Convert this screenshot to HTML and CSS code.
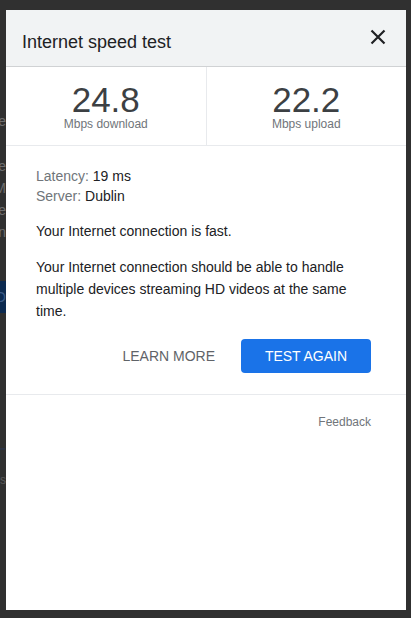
FILE: index.html
```html
<!DOCTYPE html>
<html>
<head>
<meta charset="utf-8">
<link rel="stylesheet" href="styles.css">
</head>
<body>
<div class="backdrop">
  <div class="frag frag-e">Free</div>
  <div class="frag-group">
    <div class="frag">are</div>
    <div class="frag">IM</div>
    <div class="frag">one</div>
    <div class="frag">in</div>
  </div>
  <div class="frag-btn">GO</div>
  <div class="frag frag-t">IT</div>
  <div class="frag frag-s">bs</div>
</div>
<div class="dialog">
  <div class="header">
    <div class="title">Internet speed test</div>
    <div class="close">
      <svg width="24" height="24" viewBox="0 0 24 24"><path d="M5.5 5.5 L18.5 18.5 M18.5 5.5 L5.5 18.5" stroke="#202124" stroke-width="2.2" fill="none"/></svg>
    </div>
  </div>
  <div class="stats">
    <div class="stat">
      <div class="num">24.8</div>
      <div class="unit">Mbps download</div>
    </div>
    <div class="stat stat-right">
      <div class="num">22.2</div>
      <div class="unit">Mbps upload</div>
    </div>
  </div>
  <div class="content">
    <div class="meta">
      <div><span class="label">Latency:</span> 19 ms</div>
      <div><span class="label">Server:</span> Dublin</div>
    </div>
    <p class="para">Your Internet connection is fast.</p>
    <p class="para">Your Internet connection should be able to handle multiple devices streaming HD videos at the same time.</p>
  </div>
  <div class="actions">
    <span class="learn">LEARN MORE</span>
    <span class="test">TEST AGAIN</span>
  </div>
  <div class="footer">
    <span class="feedback">Feedback</span>
  </div>
</div>
</body>
</html>
```

FILE: styles.css
```css
html, body {
  margin: 0;
  padding: 0;
}
body {
  width: 411px;
  height: 618px;
  background: #303030;
  display: flex;
  font-family: "Liberation Sans", Arial, sans-serif;
  overflow: hidden;
}
.backdrop {
  width: 6px;
  overflow: hidden;
  display: flex;
  flex-direction: column;
  padding-top: 110px;
  box-sizing: border-box;
}
.frag {
  display: flex;
  justify-content: flex-end;
  white-space: nowrap;
  font-size: 14px;
  line-height: 22px;
  color: #6e6e6e;
}
.frag-group {
  margin-top: 23px;
}
.frag-btn {
  margin-top: 38px;
  height: 32px;
  background: #0c2a50;
  color: #3a5a86;
  display: flex;
  justify-content: flex-end;
  align-items: center;
  font-size: 14px;
}
.frag-t {
  margin-top: 130px;
  font-size: 22px;
  line-height: 26px;
  color: #2c3447;
}
.frag-s {
  font-size: 12px;
  line-height: 18px;
  margin-top: 2px;
  color: #5a5a5a;
}
.dialog {
  width: 400px;
  height: 600px;
  margin-top: 10px;
  background: #ffffff;
  display: flex;
  flex-direction: column;
}
.header {
  height: 56px;
  background: #f1f3f4;
  border-bottom: 1px solid #d0d2d4;
  display: flex;
  align-items: center;
  justify-content: space-between;
  padding: 0 16px;
}
.title {
  font-size: 18px;
  line-height: 24px;
  color: #202124;
  margin-top: 8px;
}
.close {
  width: 24px;
  height: 24px;
  margin-top: -2px;
}
.close svg {
  display: block;
}
.stats {
  display: flex;
  height: 78px;
  border-bottom: 1px solid #e8eaed;
}
.stat {
  flex: 1;
  display: flex;
  flex-direction: column;
  align-items: center;
  padding-top: 14px;
}
.stat-right {
  border-left: 1px solid #e8eaed;
}
.num {
  font-size: 35px;
  line-height: 37px;
  color: #3c4043;
}
.unit {
  font-size: 12px;
  line-height: 12px;
  color: #70757a;
}
.content {
  padding: 20px 35px 0 30px;
  font-size: 14px;
  color: #202124;
}
.meta {
  line-height: 20px;
}
.label {
  color: #70757a;
}
.para {
  margin: 14px 0 0;
  line-height: 22px;
}
.actions {
  display: flex;
  justify-content: flex-end;
  align-items: center;
  gap: 26px;
  padding: 17px 35px 21px 0;
  border-bottom: 1px solid #e8eaed;
  font-size: 14px;
}
.learn {
  color: #5f6368;
}
.test {
  background: #1a73e8;
  color: #ffffff;
  border-radius: 4px;
  height: 34px;
  line-height: 34px;
  width: 130px;
  text-align: center;
}
.footer {
  display: flex;
  justify-content: flex-end;
  padding: 19px 35px 0 0;
}
.feedback {
  font-size: 12px;
  line-height: 16px;
  color: #70757a;
}
```
